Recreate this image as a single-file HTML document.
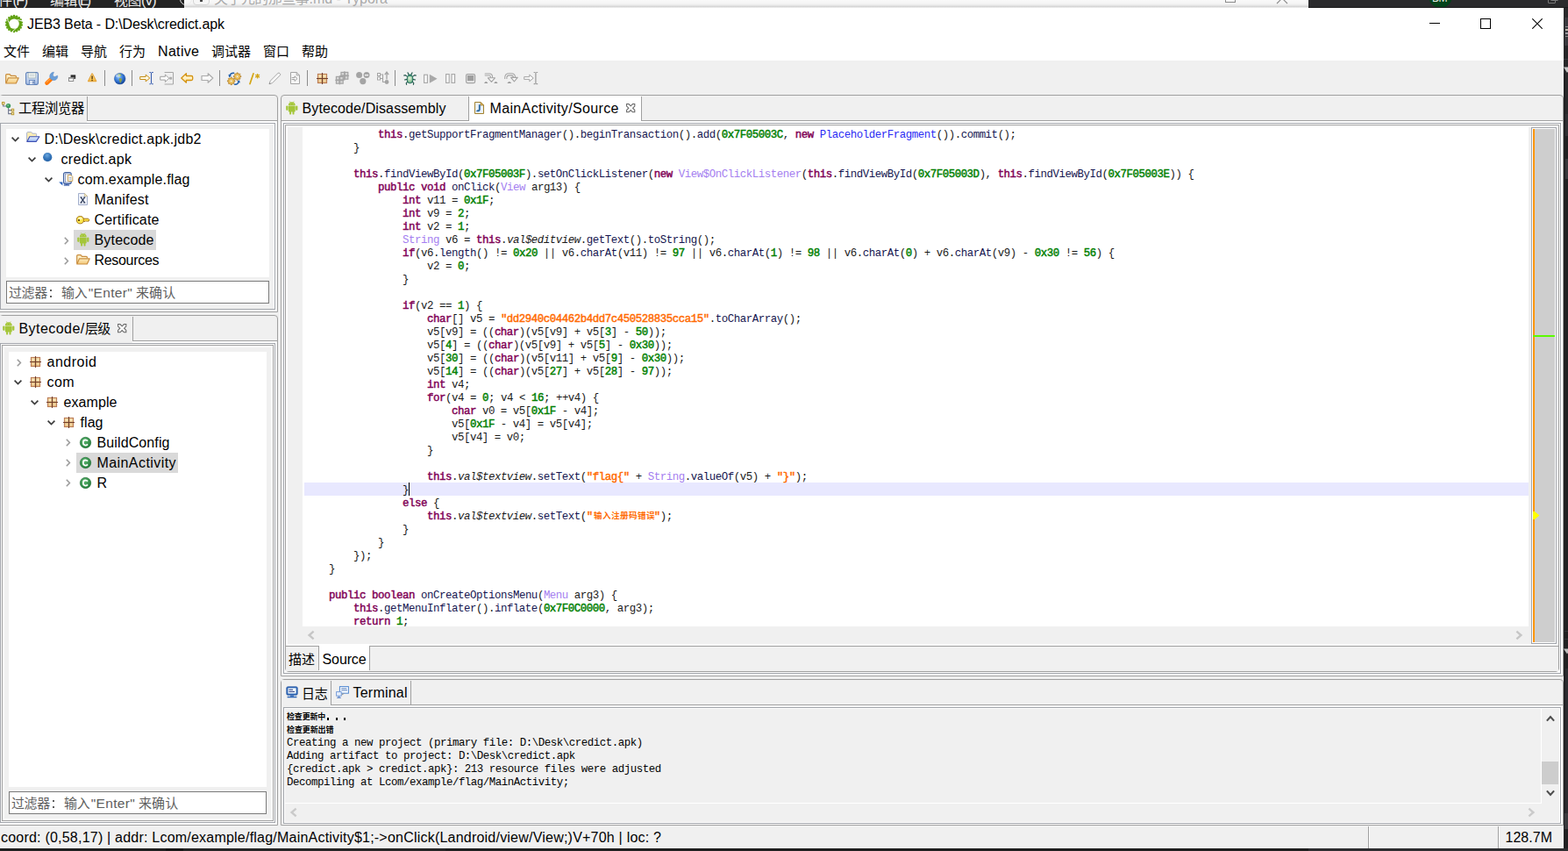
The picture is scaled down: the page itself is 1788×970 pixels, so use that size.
<!DOCTYPE html>
<html><head><meta charset="utf-8"><title>JEB3 Beta - D:\Desk\credict.apk</title>
<style>
html,body{margin:0;padding:0;}
body{width:1788px;height:970px;overflow:hidden;background:#f0f0f0;position:relative;font-family:"Liberation Sans",sans-serif;}
#root{position:absolute;left:0;top:0;width:1788px;height:970px;overflow:hidden;background:#f0f0f0;}
.k{color:#7f0055;font-weight:400;-webkit-text-stroke:0.45px #7f0055}.n{color:#008000;font-weight:400;-webkit-text-stroke:0.45px #008000}.c{color:#a47ef0}.b{color:#2a2af4}.s{color:#ff6a00;font-weight:400;-webkit-text-stroke:0.45px #ff6a00}.i{font-style:italic;color:#1a1a1a}.m{color:#15154f}
.cl{position:absolute;left:347px;height:15px;line-height:15px;white-space:pre;font-family:"Liberation Mono",monospace;font-size:12.4px;letter-spacing:-0.44px;color:#1a1a1a}
.lg{position:absolute;left:327px;height:15px;line-height:15px;white-space:pre;font-family:"Liberation Mono",monospace;font-size:12.4px;letter-spacing:-0.44px;color:#000}
.cjk{font-family:"Liberation Sans","Noto Sans CJK SC",sans-serif;}
</style></head><body><div id="root">
<svg width="0" height="0" style="position:absolute"><defs>
<linearGradient id="gFold" x1="0" y1="0" x2="0" y2="1"><stop offset="0" stop-color="#fff3c8"/><stop offset="1" stop-color="#f3c86a"/></linearGradient>
<linearGradient id="gFoldB" x1="0" y1="0" x2="0" y2="1"><stop offset="0" stop-color="#fdeec2"/><stop offset="1" stop-color="#f3c777"/></linearGradient><linearGradient id="gFoldBl" x1="0" y1="0" x2="0" y2="1"><stop offset="0" stop-color="#e6f0ff"/><stop offset="1" stop-color="#9dbcf2"/></linearGradient>
<linearGradient id="gSave" x1="0" y1="0" x2="0" y2="1"><stop offset="0" stop-color="#e4ecf8"/><stop offset="1" stop-color="#a3bbe2"/></linearGradient>
<radialGradient id="gBall" cx="0.45" cy="0.3" r="0.75"><stop offset="0" stop-color="#6aa6de"/><stop offset="0.55" stop-color="#3273b8"/><stop offset="1" stop-color="#2a64a6"/></radialGradient>
<radialGradient id="gGlobe" cx="0.4" cy="0.35" r="0.7"><stop offset="0" stop-color="#8fc4ff"/><stop offset="0.6" stop-color="#2c6fd0"/><stop offset="1" stop-color="#123d8a"/></radialGradient>
<radialGradient id="gClass" cx="0.4" cy="0.35" r="0.7"><stop offset="0" stop-color="#5fb873"/><stop offset="1" stop-color="#1f7a36"/></radialGradient>
<linearGradient id="gArr" x1="0" y1="0" x2="0" y2="1"><stop offset="0" stop-color="#fffbea"/><stop offset="1" stop-color="#ffe49a"/></linearGradient>
<linearGradient id="gPkg" x1="0" y1="0" x2="0" y2="1"><stop offset="0" stop-color="#eccf98"/><stop offset="1" stop-color="#dfae74"/></linearGradient>
<linearGradient id="gWarn" x1="0" y1="0" x2="0" y2="1"><stop offset="0" stop-color="#ffe9a8"/><stop offset="1" stop-color="#f5b83d"/></linearGradient>
<radialGradient id="gGear" cx="0.5" cy="0.5" r="0.6"><stop offset="0" stop-color="#ffe58a"/><stop offset="1" stop-color="#e09a1a"/></radialGradient>
<radialGradient id="gBug" cx="0.45" cy="0.4" r="0.7"><stop offset="0" stop-color="#e8f5e0"/><stop offset="0.6" stop-color="#8fc49a"/><stop offset="1" stop-color="#3f8f6a"/></radialGradient>
</defs></svg>
<div style="position:absolute;left:0px;top:0px;width:210px;height:9px;background:#232323;"></div>
<div style="position:absolute;left:210px;top:0px;width:1282px;height:9px;background:linear-gradient(#f9f9f9 0px,#f5f5f5 4px,#e9e9e9 6px,#d6d6d6 7.5px,#dcdcdc 8.2px,#ffffff 9px);"></div>
<div style="position:absolute;left:1492px;top:0px;width:296px;height:9px;background:#2b2b2d;"></div>
<div id="topclip" style="position:absolute;left:0;top:0;width:1788px;height:9px;overflow:hidden">
<div style="position:absolute;left:14.50px;top:-9.00px;height:20px;line-height:20px;white-space:pre;font-family:'Liberation Sans';font-size:16px;font-weight:400;color:#ececec;letter-spacing:-1.469px;">(F)</div>
<div style="position:absolute;left:88.50px;top:-9.00px;height:20px;line-height:20px;white-space:pre;font-family:'Liberation Sans';font-size:16px;font-weight:400;color:#ececec;letter-spacing:-2.914px;">(E)</div>
<div style="position:absolute;left:161.00px;top:-9.00px;height:20px;line-height:20px;white-space:pre;font-family:'Liberation Sans';font-size:16px;font-weight:400;color:#ececec;letter-spacing:-1.914px;">(V)</div>
<svg style="position:absolute;left:-2.00px;top:-11.30px;overflow:visible;" width="17.0" height="22.4" viewBox="0 -16.80 17.0 22.4"><text class="cjk" x="0" y="0" font-size="16" fill="#ececec">件</text></svg>
<svg style="position:absolute;left:57.00px;top:-11.30px;overflow:visible;" width="32.0" height="22.4" viewBox="0 -16.80 32.0 22.4"><text class="cjk" x="0" y="0" font-size="16" fill="#ececec" style="letter-spacing:-0.5px">编辑</text></svg>
<svg style="position:absolute;left:129.50px;top:-11.30px;overflow:visible;" width="32.0" height="22.4" viewBox="0 -16.80 32.0 22.4"><text class="cjk" x="0" y="0" font-size="16" fill="#ececec" style="letter-spacing:-0.5px">视图</text></svg>
<div style="position:absolute;left:204.5px;top:-8px;width:14px;height:14px;border:1.6px solid #ececec;border-radius:50%;box-sizing:border-box"></div>
<div style="position:absolute;left:219.8px;top:-10.5px;width:19px;height:16px;border:1px solid #d4d4d4;border-radius:4px;box-sizing:border-box;background:#f6f6f6"></div>
<div style="position:absolute;left:227.5px;top:0px;width:3.5px;height:1.6px;background:#444;"></div>
<svg style="position:absolute;left:244.00px;top:-12.60px;overflow:visible;" width="109.2" height="22.4" viewBox="0 -16.80 109.2 22.4"><text class="cjk" x="0" y="0" font-size="16" fill="#aaaaaa" style="letter-spacing:-0.55px">关于元的那些事</text></svg>
<div style="position:absolute;left:352.50px;top:-11.00px;height:20px;line-height:20px;white-space:pre;font-family:'Liberation Sans';font-size:16px;font-weight:400;color:#aaaaaa;letter-spacing:-0.001px;">.md - Typora</div>
<div style="position:absolute;left:1397px;top:-8px;width:12px;height:11px;border:1px solid #8a8a8a;box-sizing:border-box"></div>
<svg style="position:absolute;left:1455px;top:-9px" width="14" height="14"><path d="M1 1 L13 13 M13 1 L1 13" stroke="#8a8a8a" stroke-width="1.1"/></svg>
<div style="position:absolute;left:1628.5px;top:-18.3px;width:27px;height:27px;border-radius:50%;background:#03431a"></div>
<div style="position:absolute;left:1633.00px;top:-12.00px;height:20px;line-height:20px;white-space:pre;font-family:'Liberation Sans';font-size:12px;font-weight:400;color:#e4ece4;letter-spacing:-1.172px;">DM</div>
<div style="position:absolute;left:1492px;top:8px;width:296px;height:1px;background:#1b1b1c;"></div>
<div style="position:absolute;left:1765px;top:-6px;width:9px;height:10px;border:1px solid #7a7a7a;box-sizing:border-box;border-radius:1px"></div>
<div style="position:absolute;left:1768px;top:-9px;width:9px;height:10px;border:1px solid #7a7a7a;box-sizing:border-box;border-radius:1px"></div>
</div>
<div style="position:absolute;left:1783px;top:9px;width:5px;height:961px;background:#202022;"></div>
<div style="position:absolute;left:1783px;top:9px;width:5px;height:11px;background:#29292b;"></div>
<div style="position:absolute;left:1784px;top:20px;width:4px;height:32px;background:#39393e;"></div>
<div style="position:absolute;left:1785px;top:30px;width:3px;height:1px;background:#8d8d8d;"></div>
<div style="position:absolute;left:1785px;top:33px;width:3px;height:2px;background:#b9b3a6;"></div>
<div style="position:absolute;left:1785px;top:37px;width:3px;height:2px;background:#9a9aa0;"></div>
<div style="position:absolute;left:1785px;top:41px;width:3px;height:1px;background:#8d8d8d;"></div>
<div style="position:absolute;left:1783px;top:52px;width:5px;height:32px;background:#262628;"></div>
<div style="position:absolute;left:1783px;top:67px;width:5px;height:1px;background:#3a3a3f;"></div>
<svg style="position:absolute;left:1783px;top:76px" width="5" height="8"><path d="M0 0.5 H8 L4 7 Z" fill="#c6c6c6"/></svg>
<div style="position:absolute;left:1785px;top:84px;width:3px;height:46px;background:#29292b;"></div>
<div style="position:absolute;left:1785px;top:130px;width:3px;height:25px;background:#303034;"></div>
<div style="position:absolute;left:1785px;top:181px;width:3px;height:23px;background:#38383c;"></div>
<div style="position:absolute;left:1784px;top:719px;width:4px;height:1px;background:#333337;"></div>
<div style="position:absolute;left:1784px;top:728px;width:4px;height:1px;background:#333337;"></div>
<svg style="position:absolute;left:1783px;top:739px" width="5" height="7"><path d="M0 0.5 H8 L4 6.5 Z" fill="#bdbdbd"/></svg>
<div style="position:absolute;left:1785px;top:762px;width:3px;height:165px;background:#2c2c30;"></div>
<div style="position:absolute;left:1784px;top:927px;width:4px;height:18px;background:#3a3a3e;"></div>
<div style="position:absolute;left:0px;top:967px;width:1788px;height:3px;background:#1e1e1e;"></div>
<div style="position:absolute;left:189px;top:967px;width:20px;height:3px;background:#151515;"></div>
<div style="position:absolute;left:209px;top:967px;width:299px;height:3px;background:#242424;"></div>
<div style="position:absolute;left:1492px;top:967px;width:296px;height:3px;background:#2d2d30;"></div>
<div style="position:absolute;left:0px;top:9px;width:1783px;height:60px;background:#ffffff;"></div>
<div style="position:absolute;left:6px;top:17px;line-height:0"><svg width="20" height="20" viewBox="0 0 20 20" style="overflow:visible"><g fill="#62a214"><circle cx="18.76" cy="11.55" r="1.25"/><circle cx="17.71" cy="14.45" r="1.25"/><circle cx="15.72" cy="16.82" r="1.25"/><circle cx="13.04" cy="18.36" r="1.25"/><circle cx="10.00" cy="18.90" r="1.25"/><circle cx="6.96" cy="18.36" r="1.25"/><circle cx="4.28" cy="16.82" r="1.25"/><circle cx="2.29" cy="14.45" r="1.25"/><circle cx="1.24" cy="11.55" r="1.25"/><circle cx="1.24" cy="8.45" r="1.25"/><circle cx="2.29" cy="5.55" r="1.25"/><circle cx="4.28" cy="3.18" r="1.25"/><circle cx="6.96" cy="1.64" r="1.25"/><circle cx="10.00" cy="1.10" r="1.25"/><circle cx="13.04" cy="1.64" r="1.25"/><circle cx="15.72" cy="3.18" r="1.25"/><circle cx="17.71" cy="5.55" r="1.25"/><circle cx="18.76" cy="8.45" r="1.25"/><circle cx="10" cy="10" r="8.9"/></g><circle cx="10.1" cy="10.1" r="5.7" fill="#fff"/><g stroke="#fff" stroke-width="0.9" fill="none" stroke-linecap="round"><path d="M2.6 3.4 Q2.4 6.6 4.6 9.4"/><path d="M14.2 5.6 Q16.8 6.2 19.6 7"/><path d="M12 15.4 Q10.4 17.4 8.2 19"/></g></svg></div>
<div style="position:absolute;left:31.00px;top:18.00px;height:20px;line-height:20px;white-space:pre;font-family:'Liberation Sans';font-size:16px;font-weight:400;color:#000;letter-spacing:-0.118px;">JEB3 Beta - D:\Desk\credict.apk</div>
<div style="position:absolute;left:1630px;top:26px;width:12px;height:1px;background:#000;"></div>
<div style="position:absolute;box-sizing:border-box;left:1688px;top:21px;width:12px;height:12px;border:1px solid #000;background:transparent;border-radius:0;"></div>
<svg style="position:absolute;left:1747px;top:21px" width="12" height="12"><path d="M0.3 0.3 L11.7 11.7 M11.7 0.3 L0.3 11.7" stroke="#000" stroke-width="1.1"/></svg>
<svg style="position:absolute;left:4.00px;top:48.25px;overflow:visible;" width="31.0" height="21.0" viewBox="0 -15.75 31.0 21.0"><text class="cjk" x="0" y="0" font-size="15" fill="#000">文件</text></svg>
<svg style="position:absolute;left:48.00px;top:48.25px;overflow:visible;" width="31.0" height="21.0" viewBox="0 -15.75 31.0 21.0"><text class="cjk" x="0" y="0" font-size="15" fill="#000">编辑</text></svg>
<svg style="position:absolute;left:92.00px;top:48.25px;overflow:visible;" width="31.0" height="21.0" viewBox="0 -15.75 31.0 21.0"><text class="cjk" x="0" y="0" font-size="15" fill="#000">导航</text></svg>
<svg style="position:absolute;left:136.00px;top:48.25px;overflow:visible;" width="31.0" height="21.0" viewBox="0 -15.75 31.0 21.0"><text class="cjk" x="0" y="0" font-size="15" fill="#000">行为</text></svg>
<div style="position:absolute;left:180.00px;top:49.00px;height:20px;line-height:20px;white-space:pre;font-family:'Liberation Sans';font-size:16px;font-weight:400;color:#000;letter-spacing:0.328px;">Native</div>
<svg style="position:absolute;left:241.00px;top:48.25px;overflow:visible;" width="46.0" height="21.0" viewBox="0 -15.75 46.0 21.0"><text class="cjk" x="0" y="0" font-size="15" fill="#000">调试器</text></svg>
<svg style="position:absolute;left:300.00px;top:48.25px;overflow:visible;" width="31.0" height="21.0" viewBox="0 -15.75 31.0 21.0"><text class="cjk" x="0" y="0" font-size="15" fill="#000">窗口</text></svg>
<svg style="position:absolute;left:344.00px;top:48.25px;overflow:visible;" width="31.0" height="21.0" viewBox="0 -15.75 31.0 21.0"><text class="cjk" x="0" y="0" font-size="15" fill="#000">帮助</text></svg>
<div style="position:absolute;left:119px;top:80px;width:1px;height:18px;background:#8c8c8c;"></div>
<div style="position:absolute;left:150px;top:80px;width:1px;height:18px;background:#8c8c8c;"></div>
<div style="position:absolute;left:250px;top:80px;width:1px;height:18px;background:#8c8c8c;"></div>
<div style="position:absolute;left:350px;top:80px;width:1px;height:18px;background:#8c8c8c;"></div>
<div style="position:absolute;left:450px;top:80px;width:1px;height:18px;background:#8c8c8c;"></div>
<div style="position:absolute;left:5.6px;top:83.9px;line-height:0"><svg width="16" height="12" viewBox="0 0 16 12" style="overflow:visible"><path d="M0.7 10.6 V1.8 Q0.7 0.7 1.8 0.7 H4.6 Q5.4 0.7 5.8 1.4 L6.4 2.3 H11.4 Q12.4 2.3 12.4 3.3 V4.6" fill="#fdefc6" stroke="#c98d3e" stroke-width="1.2" stroke-linejoin="round"/><path d="M0.8 11 L3.5 4.8 H15.2 L12.3 11 Z" fill="url(#gFoldB)" stroke="#c98d3e" stroke-width="1.2" stroke-linejoin="round"/></svg></div>
<div style="position:absolute;left:29px;top:81.9px;line-height:0"><svg width="15" height="15" viewBox="0 0 15 15" style="overflow:visible"><rect x="0.6" y="0.6" width="13.8" height="13.8" rx="1.6" fill="url(#gSave)" stroke="#5c7fb8" stroke-width="1.1"/><rect x="3.2" y="0.9" width="8.6" height="6" rx="0.6" fill="#f7faf8" stroke="#8ea3a8" stroke-width="0.7"/><path d="M4.6 2.9 H10.4 M4.6 4.6 H10.4" stroke="#b9c4c6" stroke-width="0.8"/><rect x="4.4" y="9.4" width="6.2" height="5" fill="#eef3fb" stroke="#5c7fb8" stroke-width="0.8"/><rect x="5.6" y="10.4" width="1.6" height="3" fill="#c5d3ea"/><rect x="8.2" y="10.4" width="1.4" height="3.2" fill="#4f6fa8"/></svg></div>
<div style="position:absolute;left:51px;top:81.5px;line-height:0"><svg width="16" height="16" viewBox="0 0 16 16" style="overflow:visible"><path d="M2.5 12.6 L7 8.4" stroke="#ff7a0a" stroke-width="4.6" stroke-linecap="round"/><path d="M2.3 11.6 L6.4 7.8" stroke="#ffa64d" stroke-width="1.2" stroke-linecap="round"/><path d="M6.6 7.6 C4.9 5.4 5.9 1.6 9 0.5 L10.4 0.3 L9.2 3.4 Q9.4 5.2 11.4 5.6 L14.6 4.2 C15.4 7.6 12.2 10 9.4 9.4 Q7.6 9 6.6 7.6 Z" fill="#6c9fd8" stroke="#5a8cc8" stroke-width="0.6"/></svg></div>
<div style="position:absolute;left:78px;top:85.1px;line-height:0"><svg width="8.4" height="8" viewBox="0 0 8.4 8" style="overflow:visible"><rect x="2.6" y="0.4" width="5.6" height="4.4" fill="#2b2b2b"/><rect x="3.4" y="2.6" width="4" height="1.6" fill="#5a5a5a"/><rect x="0.5" y="3.5" width="5.2" height="4" fill="#ffffff" stroke="#8c8c8c"/><rect x="0.5" y="3.5" width="5.2" height="1.2" fill="#8c8c8c"/></svg></div>
<div style="position:absolute;left:99.9px;top:83.4px;line-height:0"><svg width="10.3" height="11" viewBox="0 0 10.3 11" style="overflow:visible"><path d="M5.1 1.2 L9.4 9.4 H0.9 Z" fill="url(#gWarn)" stroke="#e4a43c" stroke-width="1.8" stroke-linejoin="round"/><path d="M5.1 1.6 L9.1 9.2 H1.2 Z" fill="url(#gWarn)"/><rect x="4.3" y="3.4" width="1.6" height="3.7" fill="#6b4a12"/><rect x="4.3" y="7.8" width="1.6" height="1.4" fill="#6b4a12"/></svg></div>
<div style="position:absolute;left:129.8px;top:82.9px;line-height:0"><svg width="13.4" height="13.4" viewBox="0 0 13.4 13.4" style="overflow:visible"><circle cx="6.7" cy="6.7" r="6.3" fill="url(#gGlobe)" stroke="#1d4a9a" stroke-width="0.5"/><path d="M4.6 1.4 C6 0.9 8 1.4 8.6 2.6 C8 3.6 7.2 3.6 7 4.6 C6.2 5.2 5.2 4.6 5 3.6 C4.4 3 4.2 2.2 4.6 1.4 Z" fill="#8fb86a"/><path d="M6.2 6.2 C7.4 5.6 9 6.4 9.2 7.8 C9 9.4 8 10 7.6 11.6 C6.8 11.8 6.4 10.4 6.4 9.4 C5.6 8.6 5.4 7 6.2 6.2 Z" fill="#8a9c4a"/><ellipse cx="4.6" cy="3.4" rx="2.8" ry="1.8" fill="#fff" opacity="0.45"/></svg></div>
<div style="position:absolute;left:159px;top:82px;line-height:0"><svg width="16" height="14.2" viewBox="0 0 16 14.2" style="overflow:visible"><path d="M0.7 5.5 H7.2 V3.1 L11.8 7 L7.2 10.9 V8.5 H0.7 Z" fill="#fffbe6" stroke="#c48a12" stroke-width="1" stroke-linejoin="round"/><path d="M11.4 0.5 H13 M14 0.5 H15.8 M11.4 13.7 H13 M14 13.7 H15.8 M13.5 0.8 V13.4" stroke="#3a5fb0" stroke-width="1.1" fill="none"/></svg></div>
<div style="position:absolute;left:182px;top:82px;line-height:0"><svg width="16" height="14.5" viewBox="0 0 16 14.5" style="overflow:visible"><path d="M5.6 0.5 H15.5 V14 H5.6" fill="none" stroke="#a6a6a6" stroke-width="1"/><path d="M0.7 5.3 H6.4 V3 L10.8 7.2 L6.4 11.4 V9.1 H0.7 Z" fill="#fbfbfb" stroke="#a2a2a2" stroke-width="1" stroke-linejoin="round"/><rect x="11.2" y="5.8" width="3" height="2.8" fill="#acacac"/></svg></div>
<div style="position:absolute;left:205.5px;top:83px;line-height:0"><svg width="15" height="12" viewBox="0 0 15 12" style="overflow:visible"><path d="M0.8 6 L6.4 0.8 V3.5 H12.2 Q13.7 3.5 13.7 5 V7 Q13.7 8.5 12.2 8.5 H6.4 V11.2 Z" fill="url(#gArr)" stroke="#d4920e" stroke-width="1.3" stroke-linejoin="round"/></svg></div>
<div style="position:absolute;left:228.5px;top:83px;line-height:0"><svg width="15" height="12" viewBox="0 0 15 12" style="overflow:visible"><path d="M13.8 6 L8.2 0.8 V3.5 H1 V8.5 H8.2 V11.2 Z" fill="#f8f8f8" stroke="#acacac" stroke-width="1.2" stroke-linejoin="round"/></svg></div>
<div style="position:absolute;left:259px;top:81.5px;line-height:0"><svg width="16" height="16" viewBox="0 0 16 16" style="overflow:visible"><path d="M2.8 4.4 C3.6 2 6 0.9 8.2 1.3" fill="none" stroke="#1f5fae" stroke-width="1.4"/><path d="M1.4 2.8 L2.2 6.2 L5 4.4 Z" fill="#1f5fae"/><path d="M13.4 11 C12.6 13.4 10.2 14.5 8 14.1" fill="none" stroke="#1f5fae" stroke-width="1.4"/><path d="M14.8 12.6 L14 9.2 L11.2 11 Z" fill="#1f5fae"/><polygon points="15.85,4.56 15.85,5.84 14.69,5.96 14.32,6.84 15.06,7.75 14.15,8.66 13.24,7.92 12.36,8.29 12.24,9.45 10.96,9.45 10.84,8.29 9.96,7.92 9.05,8.66 8.14,7.75 8.88,6.84 8.51,5.96 7.35,5.84 7.35,4.56 8.51,4.44 8.88,3.56 8.14,2.65 9.05,1.74 9.96,2.48 10.84,2.11 10.96,0.95 12.24,0.95 12.36,2.11 13.24,2.48 14.15,1.74 15.06,2.65 14.32,3.56 14.69,4.44" fill="url(#gGear)" stroke="#a8782a" stroke-width="0.7" stroke-linejoin="round"/><circle cx="11.60" cy="5.20" r="1.20" fill="#fffbe6" stroke="#b88a3a" stroke-width="0.4"/><polygon points="8.95,9.76 8.95,11.04 7.79,11.16 7.42,12.04 8.16,12.95 7.25,13.86 6.34,13.12 5.46,13.49 5.34,14.65 4.06,14.65 3.94,13.49 3.06,13.12 2.15,13.86 1.24,12.95 1.98,12.04 1.61,11.16 0.45,11.04 0.45,9.76 1.61,9.64 1.98,8.76 1.24,7.85 2.15,6.94 3.06,7.68 3.94,7.31 4.06,6.15 5.34,6.15 5.46,7.31 6.34,7.68 7.25,6.94 8.16,7.85 7.42,8.76 7.79,9.64" fill="url(#gGear)" stroke="#a8782a" stroke-width="0.7" stroke-linejoin="round"/><circle cx="4.70" cy="10.40" r="1.20" fill="#fffbe6" stroke="#b88a3a" stroke-width="0.4"/></svg></div>
<div style="position:absolute;left:283.5px;top:82.5px;line-height:0"><svg width="13" height="13" viewBox="0 0 13 13" style="overflow:visible"><path d="M1 12.6 L5 0.8" stroke="#d4a514" stroke-width="1.7" stroke-linecap="round"/><path d="M9.6 1 V6.4 M7.2 2.3 L12 5.1 M12 2.3 L7.2 5.1" stroke="#d4a514" stroke-width="1.3"/></svg></div>
<div style="position:absolute;left:306px;top:82px;line-height:0"><svg width="15" height="15" viewBox="0 0 15 15" style="overflow:visible"><path d="M1 13.8 L2.2 10.2 L11 1.4 Q12 0.6 13 1.6 L13.4 2 Q14.2 3 13.4 3.8 L4.6 12.6 Z" fill="#f7f7f7" stroke="#a8a8a8" stroke-width="1" stroke-linejoin="round"/><path d="M0.8 14 L2.8 13.4 L1.4 12 Z" fill="#8a8a8a"/></svg></div>
<div style="position:absolute;left:330.5px;top:82px;line-height:0"><svg width="11" height="14" viewBox="0 0 11 14" style="overflow:visible"><path d="M0.5 0.5 H7.2 L10.5 3.8 V13.5 H0.5 Z" fill="#f6f6f6" stroke="#a4a4a4"/><path d="M7.2 0.5 V3.8 H10.5" fill="none" stroke="#a4a4a4"/><path d="M1.6 6.6 H5 V4.8 L8 7.6 L5 10.4 V8.6 H1.6" fill="#fdfdfd" stroke="#9c9c9c" stroke-width="1" stroke-linejoin="round"/></svg></div>
<div style="position:absolute;left:361px;top:83px;line-height:0"><svg width="13" height="13" viewBox="0 0 13 13" style="overflow:visible"><rect x="1.4" y="1.4" width="10.2" height="10.2" fill="url(#gPkg)" stroke="#b9774f" stroke-width="1"/><rect x="2.6" y="2.6" width="2.6" height="2.6" fill="#f6e4b8"/><rect x="7.8" y="2.6" width="2.6" height="2.6" fill="#f6e4b8"/><rect x="2.6" y="7.8" width="2.6" height="2.6" fill="#f0d6a2"/><rect x="7.8" y="7.8" width="2.6" height="2.6" fill="#f0d6a2"/><path d="M6.5 0 V13 M0 6.5 H13" stroke="#6f3f2c" stroke-width="1.1"/></svg></div>
<div style="position:absolute;left:381.6px;top:81px;line-height:0"><svg width="16.4" height="15.6" viewBox="0 0 16.4 15.6" style="overflow:visible"><path d="M5.7 5.3 h10.4 M10.9 0.1 v10.4" stroke="#a2a2a2" stroke-width="1"/><rect x="6.4" y="0.8" width="9" height="9" fill="#a4a4a4"/><rect x="7.6" y="2" width="2.4" height="2.4" fill="#d6d6d6"/><rect x="7.6" y="6.2" width="2.4" height="2.4" fill="#d6d6d6"/><rect x="11.8" y="2" width="2.4" height="2.4" fill="#d6d6d6"/><rect x="11.8" y="6.2" width="2.4" height="2.4" fill="#d6d6d6"/><path d="M0.1 10.3 h10.4 M5.3 5.1 v10.4" stroke="#a2a2a2" stroke-width="1"/><rect x="0.8" y="5.8" width="9" height="9" fill="#a4a4a4"/><rect x="2" y="7" width="2.4" height="2.4" fill="#d6d6d6"/><rect x="2" y="11.2" width="2.4" height="2.4" fill="#d6d6d6"/><rect x="6.2" y="7" width="2.4" height="2.4" fill="#d6d6d6"/><rect x="6.2" y="11.2" width="2.4" height="2.4" fill="#d6d6d6"/></svg></div>
<div style="position:absolute;left:405.6px;top:81.9px;line-height:0"><svg width="16" height="15" viewBox="0 0 16 15" style="overflow:visible"><circle cx="3.6" cy="3.6" r="3.5" fill="#a4a4a4"/><circle cx="12" cy="3.6" r="3.5" fill="#a4a4a4"/><circle cx="7.8" cy="10.6" r="3.6" fill="#a4a4a4"/><rect x="10" y="3" width="4" height="1.3" fill="#f6f6f6"/></svg></div>
<div style="position:absolute;left:429.6px;top:81.4px;line-height:0"><svg width="14" height="15.5" viewBox="0 0 14 15.5" style="overflow:visible"><rect x="0.5" y="2.5" width="3" height="3" fill="#fff" stroke="#a4a4a4"/><rect x="0.5" y="7" width="3" height="3" fill="#fff" stroke="#a4a4a4"/><path d="M4 4 H6.5 V12.5 H9.5 M4 8.5 H6.5" fill="none" stroke="#a4a4a4" stroke-width="1.1"/><circle cx="11" cy="12.5" r="2.4" fill="#a4a4a4"/><path d="M11 9.6 V1.8 M8.8 4.2 L11 1.2 L13.2 4.2" fill="none" stroke="#a4a4a4" stroke-width="1.3"/></svg></div>
<div style="position:absolute;left:460px;top:82px;line-height:0"><svg width="15" height="15" viewBox="0 0 15 15" style="overflow:visible"><g stroke="#1f5348" stroke-width="1.1" fill="none" stroke-linecap="round"><path d="M5 5.6 L2.2 3.6 L0.6 4 M4.4 8.4 L1.4 9 M5 10.8 L3.2 13 L3.6 14.4 M10 5.6 L12.8 3.6 L14.4 4 M10.6 8.4 L13.6 9 M10 10.8 L11.8 13 L11.4 14.4 M6.2 3.4 L5 0.8 M8.8 3.4 L10 0.8"/></g><ellipse cx="7.5" cy="8.2" rx="3.3" ry="4.6" fill="url(#gBug)" stroke="#1f6a5a" stroke-width="1"/><ellipse cx="7.5" cy="3.8" rx="1.8" ry="1.2" fill="#2f7f6a"/></svg></div>
<div style="position:absolute;left:482.5px;top:83.5px;line-height:0"><svg width="16" height="12" viewBox="0 0 16 12" style="overflow:visible"><rect x="0.6" y="1.2" width="3.8" height="9.2" fill="#f8f8f8" stroke="#a6a6a6" stroke-width="1.1"/><path d="M6.8 0.8 L15.6 5.8 L6.8 10.8 Z" fill="#a8a8a8"/></svg></div>
<div style="position:absolute;left:507.5px;top:84px;line-height:0"><svg width="11.4" height="11" viewBox="0 0 11.4 11" style="overflow:visible"><rect x="0.6" y="0.6" width="3.6" height="9.8" fill="#f8f8f8" stroke="#a6a6a6" stroke-width="1.1"/><rect x="7" y="0.6" width="3.6" height="9.8" fill="#f8f8f8" stroke="#a6a6a6" stroke-width="1.1"/></svg></div>
<div style="position:absolute;left:530.8px;top:83.8px;line-height:0"><svg width="11.2" height="11.2" viewBox="0 0 11.2 11.2" style="overflow:visible"><rect x="0.6" y="0.6" width="10" height="10" rx="1.6" fill="#f1f1f1" stroke="#a2a2a2" stroke-width="1.2"/><rect x="1.9" y="2" width="7.4" height="6" fill="#9e9e9e"/><rect x="1.9" y="8" width="7.4" height="1.2" fill="#dadada"/></svg></div>
<div style="position:absolute;left:551.6px;top:83.4px;line-height:0"><svg width="16" height="12" viewBox="0 0 16 12" style="overflow:visible"><path d="M0.8 2 H6 Q8.4 2 8.4 4.4 V6" fill="none" stroke="#a2a2a2" stroke-width="3.2"/><path d="M0.8 2 H6 Q8.4 2 8.4 4.4 V6" fill="none" stroke="#f8f8f8" stroke-width="1.1"/><path d="M4.4 5.8 H12.4 L8.4 10.4 Z" fill="#f8f8f8" stroke="#a2a2a2" stroke-width="1.1" stroke-linejoin="round"/><path d="M0 12 Q2.2 8 4.4 12 Z M11.2 12 Q13.4 8 15.6 12 Z" fill="#9a9a9a"/></svg></div>
<div style="position:absolute;left:574.6px;top:83.4px;line-height:0"><svg width="16" height="12" viewBox="0 0 16 12" style="overflow:visible"><path d="M1.8 7 V5.6 Q1.8 1.8 5.6 1.8 H8 Q11.4 1.8 11.4 5 V5.6" fill="none" stroke="#a2a2a2" stroke-width="3.2"/><path d="M1.8 7 V5.6 Q1.8 1.8 5.6 1.8 H8 Q11.4 1.8 11.4 5 V5.6" fill="none" stroke="#f8f8f8" stroke-width="1.1"/><path d="M7.6 5.4 H15.2 L11.4 9.8 Z" fill="#f8f8f8" stroke="#a2a2a2" stroke-width="1.1" stroke-linejoin="round"/><path d="M3.4 12 Q5.8 8 8.2 12 Z" fill="#9a9a9a"/></svg></div>
<div style="position:absolute;left:596.8px;top:82px;line-height:0"><svg width="16.5" height="14.2" viewBox="0 0 16.5 14.2" style="overflow:visible"><path d="M0.7 5.6 H6.8 V3.2 L11.2 7 L6.8 10.8 V8.4 H0.7 Z" fill="#fbfbfb" stroke="#a4a4a4" stroke-width="1" stroke-linejoin="round"/><path d="M11.6 0.5 H13.4 M14.4 0.5 H16.2 M11.6 13.7 H13.4 M14.4 13.7 H16.2 M13.9 0.8 V13.4" stroke="#9a9a9a" stroke-width="1.25" fill="none"/></svg></div>
<div style="position:absolute;box-sizing:border-box;left:-1px;top:108px;width:318px;height:248px;border:1px solid #a0a0a0;background:#f0f0f0;border-radius:4px 4px 0 0;"></div>
<div style="position:absolute;left:0px;top:138px;width:316px;height:217px;background:#ffffff;"></div>
<div style="position:absolute;left:-1px;top:137px;width:318px;height:1px;background:#a0a0a0;"></div>
<div style="position:absolute;left:0px;top:109px;width:99px;height:29px;background:#f0f0f0;"></div>
<div style="position:absolute;left:99px;top:110px;width:1px;height:28px;background:#a0a0a0;"></div>
<div style="position:absolute;left:0px;top:138px;width:99px;height:2px;background:#f0f0f0;"></div>
<div style="position:absolute;left:2px;top:115.8px;line-height:0"><svg width="15" height="16" viewBox="0 0 15 16" style="overflow:visible"><path d="M1.6 3 V5 H5 M7.6 7 V13.6 H11 M7.6 9.6 H11" fill="none" stroke="#727a92" stroke-width="1.1"/><rect x="0.5" y="0.5" width="2.4" height="2.4" fill="#fffbe0" stroke="#b8952a" stroke-width="1"/><rect x="11.3" y="8.3" width="2.4" height="2.4" fill="#fffbe0" stroke="#b8952a" stroke-width="1"/><rect x="11.3" y="12.3" width="2.4" height="2.4" fill="#fffbe0" stroke="#b8952a" stroke-width="1"/><circle cx="7.5" cy="4.6" r="2.7" fill="#3d9a5c"/><circle cx="7.1" cy="4" r="1.1" fill="#7fc79a" opacity="0.8"/></svg></div>
<svg style="position:absolute;left:21.10px;top:113.13px;overflow:visible;" width="76.2" height="21.6" viewBox="0 -16.17 76.2 21.6"><text class="cjk" x="0" y="0" font-size="15.4" fill="#000" style="letter-spacing:-0.35px">工程浏览器</text></svg>
<div style="position:absolute;box-sizing:border-box;left:0px;top:140px;width:314px;height:213px;border:1px solid #a2a5ab;background:#ffffff;border-radius:0;"></div>
<div style="position:absolute;left:1px;top:142px;width:311px;height:210px;background:#f0f0f0;"></div>
<div style="position:absolute;left:7px;top:147px;width:300px;height:169px;background:#ffffff;"></div>
<div style="position:absolute;box-sizing:border-box;left:7px;top:320px;width:300px;height:26px;border:1px solid #7a7a7a;background:#ffffff;border-radius:0;"></div>
<div style="position:absolute;left:84px;top:262px;width:94px;height:23px;background:#d9d9d9;"></div>
<div style="position:absolute;left:13px;top:155.9px;line-height:0"><svg width="9" height="6" viewBox="0 0 9 6" style="overflow:visible"><path d="M0.6 0.7 L4.5 4.5 L8.4 0.7" fill="none" stroke="#3c3c3c" stroke-width="1.7"/></svg></div>
<div style="position:absolute;left:32px;top:178.9px;line-height:0"><svg width="9" height="6" viewBox="0 0 9 6" style="overflow:visible"><path d="M0.6 0.7 L4.5 4.5 L8.4 0.7" fill="none" stroke="#3c3c3c" stroke-width="1.7"/></svg></div>
<div style="position:absolute;left:51px;top:201.9px;line-height:0"><svg width="9" height="6" viewBox="0 0 9 6" style="overflow:visible"><path d="M0.6 0.7 L4.5 4.5 L8.4 0.7" fill="none" stroke="#3c3c3c" stroke-width="1.7"/></svg></div>
<div style="position:absolute;left:72.6px;top:270.2px;line-height:0"><svg width="6" height="9" viewBox="0 0 6 9" style="overflow:visible"><path d="M0.8 0.7 L4.4 4.5 L0.8 8.3" fill="none" stroke="#9c9c9c" stroke-width="1.6"/></svg></div>
<div style="position:absolute;left:72.6px;top:293.2px;line-height:0"><svg width="6" height="9" viewBox="0 0 6 9" style="overflow:visible"><path d="M0.8 0.7 L4.4 4.5 L0.8 8.3" fill="none" stroke="#9c9c9c" stroke-width="1.6"/></svg></div>
<div style="position:absolute;left:29.6px;top:150.2px;line-height:0"><svg width="16" height="12" viewBox="0 0 16 12" style="overflow:visible"><path d="M0.6 10.8 V1.8 Q0.6 0.6 1.8 0.6 H5.4 Q6.4 0.6 6.6 1.6 L6.8 2.2 H10.6 Q11.6 2.2 11.6 3.2 V5.6" fill="#fdeeb4" stroke="#a9b2cc" stroke-width="1"/><path d="M0.8 11.4 L3.8 5.8 H14.9 L11.2 11.4 Z" fill="url(#gFoldBl)" stroke="#3d4fb4" stroke-width="1.1" stroke-linejoin="round"/></svg></div>
<div style="position:absolute;left:48.8px;top:174px;line-height:0"><svg width="10.4" height="10.4" viewBox="0 0 10.4 10.4" style="overflow:visible"><circle cx="5.2" cy="5.2" r="5.1" fill="url(#gBall)"/></svg></div>
<div style="position:absolute;left:67px;top:196.4px;line-height:0"><svg width="16" height="16" viewBox="0 0 16 16" style="overflow:visible"><rect x="5.6" y="0.6" width="8.6" height="12.8" rx="2" fill="#fff" stroke="#3f5f9f" stroke-width="1.2"/><rect x="7.4" y="2" width="5.6" height="10" fill="#f4f6fb" stroke="#6a7fb0" stroke-width="0.7"/><path d="M10.4 3.6 H14 L15.8 5.4 V10.4 H10.4 Z" fill="#fffdf2" stroke="#c49a4a" stroke-width="0.9"/><path d="M11.6 6.4 H14.6 M11.6 8.2 H14.6" stroke="#8a9ac0" stroke-width="0.8"/><path d="M8 13.6 V14.6 H6 V15.6 H12 V14.6 H10.4 V13.6" fill="#4a6ab0" stroke="#4a6ab0" stroke-width="0.5"/><path d="M0.2 11.6 H4.4 V15.6 Z" fill="#2a62c0"/></svg></div>
<div style="position:absolute;left:89px;top:220px;line-height:0"><svg width="11" height="14" viewBox="0 0 11 14" style="overflow:visible"><path d="M0.5 0.5 H7.4 L10.5 3.6 V13.5 H0.5 Z" fill="#f1f4fb" stroke="#a3afcc"/><path d="M7.4 0.5 V3.6 H10.5 Z" fill="#fdf3cf" stroke="#c8b98a" stroke-width="0.8"/><path d="M3.3 5 L7.5 11 M7.5 5 L3.3 11" stroke="#22304f" stroke-width="1.25"/><path d="M2.4 4.9 H4.6 M6.2 4.9 H8.4 M2.4 11.1 H4.6 M6.2 11.1 H8.4" stroke="#22304f" stroke-width="0.9"/></svg></div>
<div style="position:absolute;left:87px;top:245.6px;line-height:0"><svg width="16" height="9.6" viewBox="0 0 16 9.6" style="overflow:visible"><path d="M6.4 3.2 H13.4 L15 4.6 L13.8 6.4 L12.8 5.6 L12 6.6 L11 5.6 L10.2 6.4 H6.4 Z" fill="#ffdf3a" stroke="#9a6a14" stroke-width="0.9" stroke-linejoin="round"/><ellipse cx="4.4" cy="4.7" rx="4" ry="4.2" fill="#ffe84e" stroke="#9a6a14" stroke-width="0.9"/><ellipse cx="4.4" cy="3.2" rx="2.4" ry="1.4" fill="#fffac8" opacity="0.85"/><circle cx="3" cy="5" r="1.05" fill="#4a2f0c"/></svg></div>
<div style="position:absolute;left:87.5px;top:265px;line-height:0"><svg width="13.6" height="16" viewBox="0 0 13.6 16" style="overflow:visible"><g fill="#a4c639"><path d="M2.9 5.5 H10.7 V11.7 Q10.7 12.5 9.9 12.5 H3.7 Q2.9 12.5 2.9 11.7 Z"/><path d="M2.9 5 Q3.1 1.4 6.8 1.3 Q10.5 1.4 10.7 5 Z"/><rect x="0.2" y="5.4" width="2.3" height="5.6" rx="1.15"/><rect x="11.1" y="5.4" width="2.3" height="5.6" rx="1.15"/><rect x="4.1" y="11.6" width="2" height="4" rx="0.95"/><rect x="7.5" y="11.6" width="2" height="4" rx="0.95"/></g><path d="M4.3 0.3 L5.2 1.9 M9.3 0.3 L8.4 1.9" stroke="#a4c639" stroke-width="0.6"/><circle cx="5.1" cy="3.3" r="0.45" fill="#dbe9a8"/><circle cx="8.5" cy="3.3" r="0.45" fill="#dbe9a8"/></svg></div>
<div style="position:absolute;left:86.8px;top:290.3px;line-height:0"><svg width="16" height="12" viewBox="0 0 16 12" style="overflow:visible"><path d="M0.7 10.6 V1.8 Q0.7 0.7 1.8 0.7 H4.6 Q5.4 0.7 5.8 1.4 L6.4 2.3 H11.4 Q12.4 2.3 12.4 3.3 V4.6" fill="#fdefc6" stroke="#c98d3e" stroke-width="1.2" stroke-linejoin="round"/><path d="M0.8 11 L3.5 4.8 H15.2 L12.3 11 Z" fill="url(#gFoldB)" stroke="#c98d3e" stroke-width="1.2" stroke-linejoin="round"/></svg></div>
<div style="position:absolute;left:50.50px;top:149.00px;height:20px;line-height:20px;white-space:pre;font-family:'Liberation Sans';font-size:16px;font-weight:400;color:#000;letter-spacing:0.243px;">D:\Desk\credict.apk.jdb2</div>
<div style="position:absolute;left:69.50px;top:172.00px;height:20px;line-height:20px;white-space:pre;font-family:'Liberation Sans';font-size:16px;font-weight:400;color:#000;letter-spacing:0.312px;">credict.apk</div>
<div style="position:absolute;left:88.50px;top:195.00px;height:20px;line-height:20px;white-space:pre;font-family:'Liberation Sans';font-size:16px;font-weight:400;color:#000;letter-spacing:0.174px;">com.example.flag</div>
<div style="position:absolute;left:107.50px;top:218.00px;height:20px;line-height:20px;white-space:pre;font-family:'Liberation Sans';font-size:16px;font-weight:400;color:#000;letter-spacing:0.219px;">Manifest</div>
<div style="position:absolute;left:107.50px;top:241.00px;height:20px;line-height:20px;white-space:pre;font-family:'Liberation Sans';font-size:16px;font-weight:400;color:#000;letter-spacing:0.197px;">Certificate</div>
<div style="position:absolute;left:107.50px;top:264.00px;height:20px;line-height:20px;white-space:pre;font-family:'Liberation Sans';font-size:16px;font-weight:400;color:#000;letter-spacing:0.183px;">Bytecode</div>
<div style="position:absolute;left:107.50px;top:287.00px;height:20px;line-height:20px;white-space:pre;font-family:'Liberation Sans';font-size:16px;font-weight:400;color:#000;letter-spacing:-0.311px;">Resources</div>
<svg style="position:absolute;left:9.80px;top:323.05px;overflow:visible;" width="44.8" height="21.0" viewBox="0 -15.75 44.8 21.0"><text class="cjk" x="0" y="0" font-size="15" fill="#5e5e5e" style="letter-spacing:-0.4px">过滤器</text></svg>
<div style="position:absolute;left:57.3px;top:329.8px;width:2px;height:2px;background:#5e5e5e;"></div>
<div style="position:absolute;left:57.3px;top:337.4px;width:2px;height:2px;background:#5e5e5e;"></div>
<svg style="position:absolute;left:69.80px;top:323.05px;overflow:visible;" width="30.6" height="21.0" viewBox="0 -15.75 30.6 21.0"><text class="cjk" x="0" y="0" font-size="15" fill="#5e5e5e" style="letter-spacing:-0.2px">输入</text></svg>
<div style="position:absolute;left:100.80px;top:324.00px;height:20px;line-height:20px;white-space:pre;font-family:'Liberation Sans';font-size:15.5px;font-weight:400;color:#5e5e5e;letter-spacing:0.323px;">&quot;Enter&quot;</div>
<svg style="position:absolute;left:155.30px;top:323.05px;overflow:visible;" width="46.3" height="21.0" viewBox="0 -15.75 46.3 21.0"><text class="cjk" x="0" y="0" font-size="15" fill="#5e5e5e" style="letter-spacing:0.1px">来确认</text></svg>
<div style="position:absolute;box-sizing:border-box;left:-1px;top:359px;width:318px;height:582px;border:1px solid #a0a0a0;background:#f0f0f0;border-radius:4px 4px 0 0;"></div>
<div style="position:absolute;left:0px;top:389px;width:316px;height:551px;background:#ffffff;"></div>
<div style="position:absolute;left:-1px;top:388px;width:318px;height:1px;background:#a0a0a0;"></div>
<div style="position:absolute;left:0px;top:360px;width:151px;height:29px;background:#f0f0f0;"></div>
<div style="position:absolute;left:151px;top:361px;width:1px;height:28px;background:#a0a0a0;"></div>
<div style="position:absolute;left:0px;top:389px;width:151px;height:2px;background:#f0f0f0;"></div>
<div style="position:absolute;left:2.5px;top:366px;line-height:0"><svg width="13.6" height="16" viewBox="0 0 13.6 16" style="overflow:visible"><g fill="#a4c639"><path d="M2.9 5.5 H10.7 V11.7 Q10.7 12.5 9.9 12.5 H3.7 Q2.9 12.5 2.9 11.7 Z"/><path d="M2.9 5 Q3.1 1.4 6.8 1.3 Q10.5 1.4 10.7 5 Z"/><rect x="0.2" y="5.4" width="2.3" height="5.6" rx="1.15"/><rect x="11.1" y="5.4" width="2.3" height="5.6" rx="1.15"/><rect x="4.1" y="11.6" width="2" height="4" rx="0.95"/><rect x="7.5" y="11.6" width="2" height="4" rx="0.95"/></g><path d="M4.3 0.3 L5.2 1.9 M9.3 0.3 L8.4 1.9" stroke="#a4c639" stroke-width="0.6"/><circle cx="5.1" cy="3.3" r="0.45" fill="#dbe9a8"/><circle cx="8.5" cy="3.3" r="0.45" fill="#dbe9a8"/></svg></div>
<div style="position:absolute;left:21.50px;top:365.00px;height:20px;line-height:20px;white-space:pre;font-family:'Liberation Sans';font-size:16px;font-weight:400;color:#000;letter-spacing:0.443px;">Bytecode/</div>
<svg style="position:absolute;left:96.60px;top:364.45px;overflow:visible;" width="29.6" height="21.0" viewBox="0 -15.75 29.6 21.0"><text class="cjk" x="0" y="0" font-size="15" fill="#000" style="letter-spacing:-0.7px">层级</text></svg>
<div style="position:absolute;left:133.8px;top:368.8px;line-height:0"><svg width="10.4" height="10.4" viewBox="0 0 10.4 10.4" style="overflow:visible"><path d="M0.6 0.6 H3 L5.2 2.8 L7.4 0.6 H9.8 V3 L7.6 5.2 L9.8 7.4 V9.8 H7.4 L5.2 7.6 L3 9.8 H0.6 V7.4 L2.8 5.2 L0.6 3 Z" fill="#fbfbfb" stroke="#646464" stroke-width="1.05" stroke-linejoin="miter"/></svg></div>
<div style="position:absolute;box-sizing:border-box;left:0px;top:391px;width:314px;height:547px;border:1px solid #a2a5ab;background:#ffffff;border-radius:0;"></div>
<div style="position:absolute;box-sizing:border-box;left:2px;top:393px;width:310px;height:543px;border:1px solid #a0a0a0;background:#ffffff;border-radius:0;"></div>
<div style="position:absolute;left:5px;top:396px;width:304px;height:537px;background:#f0f0f0;"></div>
<div style="position:absolute;left:10px;top:401px;width:294px;height:496px;background:#ffffff;"></div>
<div style="position:absolute;box-sizing:border-box;left:10px;top:902px;width:294px;height:26px;border:1px solid #7a7a7a;background:#ffffff;border-radius:0;"></div>
<svg style="position:absolute;left:12.80px;top:905.05px;overflow:visible;" width="44.8" height="21.0" viewBox="0 -15.75 44.8 21.0"><text class="cjk" x="0" y="0" font-size="15" fill="#5e5e5e" style="letter-spacing:-0.4px">过滤器</text></svg>
<div style="position:absolute;left:60.3px;top:911.8px;width:2px;height:2px;background:#5e5e5e;"></div>
<div style="position:absolute;left:60.3px;top:919.4px;width:2px;height:2px;background:#5e5e5e;"></div>
<svg style="position:absolute;left:72.80px;top:905.05px;overflow:visible;" width="30.6" height="21.0" viewBox="0 -15.75 30.6 21.0"><text class="cjk" x="0" y="0" font-size="15" fill="#5e5e5e" style="letter-spacing:-0.2px">输入</text></svg>
<div style="position:absolute;left:103.80px;top:906.00px;height:20px;line-height:20px;white-space:pre;font-family:'Liberation Sans';font-size:15.5px;font-weight:400;color:#5e5e5e;letter-spacing:0.323px;">&quot;Enter&quot;</div>
<svg style="position:absolute;left:158.30px;top:905.05px;overflow:visible;" width="46.3" height="21.0" viewBox="0 -15.75 46.3 21.0"><text class="cjk" x="0" y="0" font-size="15" fill="#5e5e5e" style="letter-spacing:0.1px">来确认</text></svg>
<div style="position:absolute;left:87px;top:516px;width:116px;height:23px;background:#d9d9d9;"></div>
<div style="position:absolute;left:18.6px;top:408.6px;line-height:0"><svg width="6" height="9" viewBox="0 0 6 9" style="overflow:visible"><path d="M0.8 0.7 L4.4 4.5 L0.8 8.3" fill="none" stroke="#9c9c9c" stroke-width="1.6"/></svg></div>
<div style="position:absolute;left:16px;top:432.6px;line-height:0"><svg width="9" height="6" viewBox="0 0 9 6" style="overflow:visible"><path d="M0.6 0.7 L4.5 4.5 L8.4 0.7" fill="none" stroke="#3c3c3c" stroke-width="1.7"/></svg></div>
<div style="position:absolute;left:35px;top:455.6px;line-height:0"><svg width="9" height="6" viewBox="0 0 9 6" style="overflow:visible"><path d="M0.6 0.7 L4.5 4.5 L8.4 0.7" fill="none" stroke="#3c3c3c" stroke-width="1.7"/></svg></div>
<div style="position:absolute;left:54px;top:478.6px;line-height:0"><svg width="9" height="6" viewBox="0 0 9 6" style="overflow:visible"><path d="M0.6 0.7 L4.5 4.5 L8.4 0.7" fill="none" stroke="#3c3c3c" stroke-width="1.7"/></svg></div>
<div style="position:absolute;left:75.4px;top:500.4px;line-height:0"><svg width="6" height="9" viewBox="0 0 6 9" style="overflow:visible"><path d="M0.8 0.7 L4.4 4.5 L0.8 8.3" fill="none" stroke="#9c9c9c" stroke-width="1.6"/></svg></div>
<div style="position:absolute;left:75.4px;top:523.4px;line-height:0"><svg width="6" height="9" viewBox="0 0 6 9" style="overflow:visible"><path d="M0.8 0.7 L4.4 4.5 L0.8 8.3" fill="none" stroke="#9c9c9c" stroke-width="1.6"/></svg></div>
<div style="position:absolute;left:75.4px;top:546.4px;line-height:0"><svg width="6" height="9" viewBox="0 0 6 9" style="overflow:visible"><path d="M0.8 0.7 L4.4 4.5 L0.8 8.3" fill="none" stroke="#9c9c9c" stroke-width="1.6"/></svg></div>
<div style="position:absolute;left:34px;top:406px;line-height:0"><svg width="13" height="13" viewBox="0 0 13 13" style="overflow:visible"><rect x="1.4" y="1.4" width="10.2" height="10.2" fill="url(#gPkg)" stroke="#b9774f" stroke-width="1"/><rect x="2.6" y="2.6" width="2.6" height="2.6" fill="#f6e4b8"/><rect x="7.8" y="2.6" width="2.6" height="2.6" fill="#f6e4b8"/><rect x="2.6" y="7.8" width="2.6" height="2.6" fill="#f0d6a2"/><rect x="7.8" y="7.8" width="2.6" height="2.6" fill="#f0d6a2"/><path d="M6.5 0 V13 M0 6.5 H13" stroke="#6f3f2c" stroke-width="1.1"/></svg></div>
<div style="position:absolute;left:34px;top:429px;line-height:0"><svg width="13" height="13" viewBox="0 0 13 13" style="overflow:visible"><rect x="1.4" y="1.4" width="10.2" height="10.2" fill="url(#gPkg)" stroke="#b9774f" stroke-width="1"/><rect x="2.6" y="2.6" width="2.6" height="2.6" fill="#f6e4b8"/><rect x="7.8" y="2.6" width="2.6" height="2.6" fill="#f6e4b8"/><rect x="2.6" y="7.8" width="2.6" height="2.6" fill="#f0d6a2"/><rect x="7.8" y="7.8" width="2.6" height="2.6" fill="#f0d6a2"/><path d="M6.5 0 V13 M0 6.5 H13" stroke="#6f3f2c" stroke-width="1.1"/></svg></div>
<div style="position:absolute;left:53px;top:452px;line-height:0"><svg width="13" height="13" viewBox="0 0 13 13" style="overflow:visible"><rect x="1.4" y="1.4" width="10.2" height="10.2" fill="url(#gPkg)" stroke="#b9774f" stroke-width="1"/><rect x="2.6" y="2.6" width="2.6" height="2.6" fill="#f6e4b8"/><rect x="7.8" y="2.6" width="2.6" height="2.6" fill="#f6e4b8"/><rect x="2.6" y="7.8" width="2.6" height="2.6" fill="#f0d6a2"/><rect x="7.8" y="7.8" width="2.6" height="2.6" fill="#f0d6a2"/><path d="M6.5 0 V13 M0 6.5 H13" stroke="#6f3f2c" stroke-width="1.1"/></svg></div>
<div style="position:absolute;left:72px;top:475px;line-height:0"><svg width="13" height="13" viewBox="0 0 13 13" style="overflow:visible"><rect x="1.4" y="1.4" width="10.2" height="10.2" fill="url(#gPkg)" stroke="#b9774f" stroke-width="1"/><rect x="2.6" y="2.6" width="2.6" height="2.6" fill="#f6e4b8"/><rect x="7.8" y="2.6" width="2.6" height="2.6" fill="#f6e4b8"/><rect x="2.6" y="7.8" width="2.6" height="2.6" fill="#f0d6a2"/><rect x="7.8" y="7.8" width="2.6" height="2.6" fill="#f0d6a2"/><path d="M6.5 0 V13 M0 6.5 H13" stroke="#6f3f2c" stroke-width="1.1"/></svg></div>
<div style="position:absolute;left:91px;top:498px;line-height:0"><svg width="13" height="13" viewBox="0 0 13 13" style="overflow:visible"><circle cx="6.5" cy="6.5" r="6.2" fill="url(#gClass)" stroke="#1d6a30" stroke-width="0.6"/><path d="M9 4.6 Q8 3.4 6.4 3.4 Q3.8 3.6 3.8 6.5 Q3.8 9.4 6.4 9.6 Q8 9.6 9 8.4" fill="none" stroke="#fff" stroke-width="1.7"/></svg></div>
<div style="position:absolute;left:91px;top:521px;line-height:0"><svg width="13" height="13" viewBox="0 0 13 13" style="overflow:visible"><circle cx="6.5" cy="6.5" r="6.2" fill="url(#gClass)" stroke="#1d6a30" stroke-width="0.6"/><path d="M9 4.6 Q8 3.4 6.4 3.4 Q3.8 3.6 3.8 6.5 Q3.8 9.4 6.4 9.6 Q8 9.6 9 8.4" fill="none" stroke="#fff" stroke-width="1.7"/></svg></div>
<div style="position:absolute;left:91px;top:544px;line-height:0"><svg width="13" height="13" viewBox="0 0 13 13" style="overflow:visible"><circle cx="6.5" cy="6.5" r="6.2" fill="url(#gClass)" stroke="#1d6a30" stroke-width="0.6"/><path d="M9 4.6 Q8 3.4 6.4 3.4 Q3.8 3.6 3.8 6.5 Q3.8 9.4 6.4 9.6 Q8 9.6 9 8.4" fill="none" stroke="#fff" stroke-width="1.7"/></svg></div>
<div style="position:absolute;left:53.50px;top:403.00px;height:20px;line-height:20px;white-space:pre;font-family:'Liberation Sans';font-size:16px;font-weight:400;color:#000;letter-spacing:0.521px;">android</div>
<div style="position:absolute;left:53.50px;top:426.00px;height:20px;line-height:20px;white-space:pre;font-family:'Liberation Sans';font-size:16px;font-weight:400;color:#000;letter-spacing:0.383px;">com</div>
<div style="position:absolute;left:72.50px;top:449.00px;height:20px;line-height:20px;white-space:pre;font-family:'Liberation Sans';font-size:16px;font-weight:400;color:#000;letter-spacing:0.086px;">example</div>
<div style="position:absolute;left:91.50px;top:472.00px;height:20px;line-height:20px;white-space:pre;font-family:'Liberation Sans';font-size:16px;font-weight:400;color:#000;letter-spacing:0.068px;">flag</div>
<div style="position:absolute;left:110.50px;top:495.00px;height:20px;line-height:20px;white-space:pre;font-family:'Liberation Sans';font-size:16px;font-weight:400;color:#000;letter-spacing:0.117px;">BuildConfig</div>
<div style="position:absolute;left:110.50px;top:518.00px;height:20px;line-height:20px;white-space:pre;font-family:'Liberation Sans';font-size:16px;font-weight:400;color:#000;letter-spacing:0.422px;">MainActivity</div>
<div style="position:absolute;left:110.50px;top:541.00px;height:20px;line-height:20px;white-space:pre;font-family:'Liberation Sans';font-size:16px;font-weight:400;color:#000;letter-spacing:0.000px;">R</div>
<div style="position:absolute;box-sizing:border-box;left:320px;top:108px;width:1463px;height:663px;border:1px solid #a0a0a0;background:#f0f0f0;border-radius:4px 4px 0 0;"></div>
<div style="position:absolute;left:321px;top:138px;width:1461px;height:632px;background:#ffffff;"></div>
<div style="position:absolute;left:320px;top:137px;width:1463px;height:1px;background:#a0a0a0;"></div>
<div style="position:absolute;left:534px;top:110px;width:1px;height:28px;background:#a0a0a0;"></div>
<div style="position:absolute;left:535px;top:109px;width:196px;height:31px;background:#ffffff;"></div>
<div style="position:absolute;left:731px;top:110px;width:1px;height:28px;background:#a0a0a0;"></div>
<div style="position:absolute;left:326px;top:115px;line-height:0"><svg width="13.6" height="16" viewBox="0 0 13.6 16" style="overflow:visible"><g fill="#a4c639"><path d="M2.9 5.5 H10.7 V11.7 Q10.7 12.5 9.9 12.5 H3.7 Q2.9 12.5 2.9 11.7 Z"/><path d="M2.9 5 Q3.1 1.4 6.8 1.3 Q10.5 1.4 10.7 5 Z"/><rect x="0.2" y="5.4" width="2.3" height="5.6" rx="1.15"/><rect x="11.1" y="5.4" width="2.3" height="5.6" rx="1.15"/><rect x="4.1" y="11.6" width="2" height="4" rx="0.95"/><rect x="7.5" y="11.6" width="2" height="4" rx="0.95"/></g><path d="M4.3 0.3 L5.2 1.9 M9.3 0.3 L8.4 1.9" stroke="#a4c639" stroke-width="0.6"/><circle cx="5.1" cy="3.3" r="0.45" fill="#dbe9a8"/><circle cx="8.5" cy="3.3" r="0.45" fill="#dbe9a8"/></svg></div>
<div style="position:absolute;left:344.50px;top:114.00px;height:20px;line-height:20px;white-space:pre;font-family:'Liberation Sans';font-size:16px;font-weight:400;color:#000;letter-spacing:0.113px;">Bytecode/Disassembly</div>
<div style="position:absolute;left:541px;top:116px;line-height:0"><svg width="11" height="14" viewBox="0 0 11 14" style="overflow:visible"><path d="M0.5 0.5 H7 L10.5 4 V13.5 H0.5 Z" fill="#eaf1fb" stroke="#a3812d"/><path d="M7 0.5 V4 H10.5 Z" fill="#e3b860" stroke="#a3812d" stroke-width="0.8"/><path d="M5.8 3.2 V8.2 Q5.8 10.4 3.9 10.4 Q3 10.4 2.6 10" fill="none" stroke="#2a689f" stroke-width="1.9"/></svg></div>
<div style="position:absolute;left:558.50px;top:114.00px;height:20px;line-height:20px;white-space:pre;font-family:'Liberation Sans';font-size:16px;font-weight:400;color:#000;letter-spacing:0.361px;">MainActivity/Source</div>
<div style="position:absolute;left:713.7px;top:117.8px;line-height:0"><svg width="10.4" height="10.4" viewBox="0 0 10.4 10.4" style="overflow:visible"><path d="M0.6 0.6 H3 L5.2 2.8 L7.4 0.6 H9.8 V3 L7.6 5.2 L9.8 7.4 V9.8 H7.4 L5.2 7.6 L3 9.8 H0.6 V7.4 L2.8 5.2 L0.6 3 Z" fill="#fbfbfb" stroke="#646464" stroke-width="1.05" stroke-linejoin="miter"/></svg></div>
<div style="position:absolute;box-sizing:border-box;left:323px;top:140px;width:1457px;height:628px;border:1px solid #a2a5ab;background:#ffffff;border-radius:0;"></div>
<div style="position:absolute;box-sizing:border-box;left:325px;top:142px;width:1453px;height:624px;border:1px solid #a0a0a0;background:#ffffff;border-radius:0 0 4px 4px;"></div>
<div style="position:absolute;left:328px;top:145px;width:1415px;height:569px;background:#ffffff;"></div>
<div style="position:absolute;left:328px;top:145px;width:17px;height:569px;background:#f0f0f0;"></div>
<div style="position:absolute;left:328px;top:714px;width:1418px;height:20px;background:#f0f0f0;"></div>
<div style="position:absolute;left:1743px;top:145px;width:3px;height:589px;background:#f0f0f0;"></div>
<div style="position:absolute;left:347px;top:550px;width:1396px;height:15px;background:#e8e8ff;"></div>
<div style="position:absolute;box-sizing:border-box;left:1746px;top:145px;width:29px;height:589px;border:1px solid #a2a5ab;background:#ffffff;border-radius:0;"></div>
<div style="position:absolute;left:1748px;top:147px;width:25px;height:585px;background:#cecece;"></div>
<div style="position:absolute;left:1748px;top:147px;width:2px;height:585px;background:#ff9500;"></div>
<div style="position:absolute;left:1748px;top:382px;width:25px;height:2px;background:#5cfa00;"></div>
<svg style="position:absolute;left:1748px;top:583px" width="8" height="9"><path d="M0 0 H2 L7.4 4.5 L2 9 H0 Z" fill="#ffff00"/></svg>
<div style="position:absolute;left:1728.2px;top:718.9px;line-height:0"><svg width="8" height="10" viewBox="0 0 8 10" style="overflow:visible"><path d="M1.4 0.7 L6.4 5 L1.4 9.3" fill="none" stroke="#c6c6c6" stroke-width="2.4"/></svg></div>
<div style="position:absolute;left:351.3px;top:718.9px;line-height:0;transform:scaleX(-1)"><svg width="8" height="10" viewBox="0 0 8 10" style="overflow:visible"><path d="M1.4 0.7 L6.4 5 L1.4 9.3" fill="none" stroke="#c6c6c6" stroke-width="2.4"/></svg></div>
<div style="position:absolute;left:326px;top:737px;width:1451px;height:28px;background:#f0f0f0;"></div>
<div style="position:absolute;left:326px;top:736px;width:1451px;height:1px;background:#a0a0a0;"></div>
<div style="position:absolute;left:364px;top:734px;width:57px;height:31px;background:#ffffff;"></div>
<div style="position:absolute;left:363px;top:737px;width:1px;height:27px;background:#a0a0a0;"></div>
<div style="position:absolute;left:421px;top:737px;width:1px;height:27px;background:#a0a0a0;"></div>
<svg style="position:absolute;left:329.00px;top:741.25px;overflow:visible;" width="31.0" height="21.0" viewBox="0 -15.75 31.0 21.0"><text class="cjk" x="0" y="0" font-size="15" fill="#000">描述</text></svg>
<div style="position:absolute;left:367.60px;top:742.00px;height:20px;line-height:20px;white-space:pre;font-family:'Liberation Sans';font-size:16px;font-weight:400;color:#000;letter-spacing:-0.141px;">Source</div>
<div style="position:absolute;left:345px;top:145px;width:1398px;height:569px;overflow:hidden"><div style="position:absolute;left:-345px;top:-145px">
<div class="cl" style="top:147.00px">            <span class="k">this</span>.<span class="m">getSupportFragmentManager</span>().<span class="m">beginTransaction</span>().<span class="m">add</span>(<span class="n">0x7F05003C</span>, <span class="k">new</span> <span class="b">PlaceholderFragment</span>()).<span class="m">commit</span>();</div>
<div class="cl" style="top:162.00px">        }</div>
<div class="cl" style="top:192.00px">        <span class="k">this</span>.<span class="m">findViewById</span>(<span class="n">0x7F05003F</span>).<span class="m">setOnClickListener</span>(<span class="k">new</span> <span class="c">View$OnClickListener</span>(<span class="k">this</span>.<span class="m">findViewById</span>(<span class="n">0x7F05003D</span>), <span class="k">this</span>.<span class="m">findViewById</span>(<span class="n">0x7F05003E</span>)) {</div>
<div class="cl" style="top:207.00px">            <span class="k">public</span> <span class="k">void</span> <span class="m">onClick</span>(<span class="c">View</span> arg13) {</div>
<div class="cl" style="top:222.00px">                <span class="k">int</span> v11 = <span class="n">0x1F</span>;</div>
<div class="cl" style="top:237.00px">                <span class="k">int</span> v9 = <span class="n">2</span>;</div>
<div class="cl" style="top:252.00px">                <span class="k">int</span> v2 = <span class="n">1</span>;</div>
<div class="cl" style="top:267.00px">                <span class="c">String</span> v6 = <span class="k">this</span>.<span class="i">val$editview</span>.<span class="m">getText</span>().<span class="m">toString</span>();</div>
<div class="cl" style="top:282.00px">                <span class="k">if</span>(v6.<span class="m">length</span>() != <span class="n">0x20</span> || v6.<span class="m">charAt</span>(v11) != <span class="n">97</span> || v6.<span class="m">charAt</span>(<span class="n">1</span>) != <span class="n">98</span> || v6.<span class="m">charAt</span>(<span class="n">0</span>) + v6.<span class="m">charAt</span>(v9) - <span class="n">0x30</span> != <span class="n">56</span>) {</div>
<div class="cl" style="top:297.00px">                    v2 = <span class="n">0</span>;</div>
<div class="cl" style="top:312.00px">                }</div>
<div class="cl" style="top:342.00px">                <span class="k">if</span>(v2 == <span class="n">1</span>) {</div>
<div class="cl" style="top:357.00px">                    <span class="k">char</span>[] v5 = <span class="s">&quot;dd2940c04462b4dd7c450528835cca15&quot;</span>.<span class="m">toCharArray</span>();</div>
<div class="cl" style="top:372.00px">                    v5[v9] = ((<span class="k">char</span>)(v5[v9] + v5[<span class="n">3</span>] - <span class="n">50</span>));</div>
<div class="cl" style="top:387.00px">                    v5[<span class="n">4</span>] = ((<span class="k">char</span>)(v5[v9] + v5[<span class="n">5</span>] - <span class="n">0x30</span>));</div>
<div class="cl" style="top:402.00px">                    v5[<span class="n">30</span>] = ((<span class="k">char</span>)(v5[v11] + v5[<span class="n">9</span>] - <span class="n">0x30</span>));</div>
<div class="cl" style="top:417.00px">                    v5[<span class="n">14</span>] = ((<span class="k">char</span>)(v5[<span class="n">27</span>] + v5[<span class="n">28</span>] - <span class="n">97</span>));</div>
<div class="cl" style="top:432.00px">                    <span class="k">int</span> v4;</div>
<div class="cl" style="top:447.00px">                    <span class="k">for</span>(v4 = <span class="n">0</span>; v4 &lt; <span class="n">16</span>; ++v4) {</div>
<div class="cl" style="top:462.00px">                        <span class="k">char</span> v0 = v5[<span class="n">0x1F</span> - v4];</div>
<div class="cl" style="top:477.00px">                        v5[<span class="n">0x1F</span> - v4] = v5[v4];</div>
<div class="cl" style="top:492.00px">                        v5[v4] = v0;</div>
<div class="cl" style="top:507.00px">                    }</div>
<div class="cl" style="top:537.00px">                    <span class="k">this</span>.<span class="i">val$textview</span>.<span class="m">setText</span>(<span class="s">&quot;flag{&quot;</span> + <span class="c">String</span>.<span class="m">valueOf</span>(v5) + <span class="s">&quot;}&quot;</span>);</div>
<div class="cl" style="top:552.00px">                }</div>
<div class="cl" style="top:567.00px">                <span class="k">else</span> {</div>
<div class="cl" style="top:582.00px">                    <span class="k">this</span>.<span class="i">val$textview</span>.<span class="m">setText</span>(<span class="s">&quot;</span><span style="display:inline-block;width:70px"></span><span class="s">&quot;</span>);</div>
<div class="cl" style="top:597.00px">                }</div>
<div class="cl" style="top:612.00px">            }</div>
<div class="cl" style="top:627.00px">        });</div>
<div class="cl" style="top:642.00px">    }</div>
<div class="cl" style="top:672.00px">    <span class="k">public</span> <span class="k">boolean</span> <span class="m">onCreateOptionsMenu</span>(<span class="c">Menu</span> arg3) {</div>
<div class="cl" style="top:687.00px">        <span class="k">this</span>.<span class="m">getMenuInflater</span>().<span class="m">inflate</span>(<span class="n">0x7F0C0000</span>, arg3);</div>
<div class="cl" style="top:702.00px">        <span class="k">return</span> <span class="n">1</span>;</div>
<svg style="position:absolute;left:677.00px;top:581.42px;overflow:visible;" width="71.0" height="13.4" viewBox="0 -10.08 71.0 13.4"><text class="cjk" x="0" y="0" font-size="9.6" font-weight="bold" fill="#ff6a00" style="letter-spacing:0.4px">输入注册码错误</text></svg>
<div style="position:absolute;left:466px;top:550px;width:1px;height:15px;background:#000;"></div>
</div></div>
<div style="position:absolute;box-sizing:border-box;left:320px;top:774px;width:1463px;height:167px;border:1px solid #a0a0a0;background:#f0f0f0;border-radius:4px 4px 0 0;"></div>
<div style="position:absolute;left:321px;top:804px;width:1461px;height:136px;background:#ffffff;"></div>
<div style="position:absolute;left:320px;top:803px;width:1463px;height:1px;background:#a0a0a0;"></div>
<div style="position:absolute;left:321px;top:775px;width:56px;height:29px;background:#f0f0f0;"></div>
<div style="position:absolute;left:377px;top:776px;width:1px;height:28px;background:#a0a0a0;"></div>
<div style="position:absolute;left:468px;top:776px;width:1px;height:28px;background:#a0a0a0;"></div>
<div style="position:absolute;left:321px;top:804px;width:56px;height:2px;background:#f0f0f0;"></div>
<div style="position:absolute;left:325.5px;top:781.7px;line-height:0"><svg width="14" height="13.6" viewBox="0 0 14 13.6" style="overflow:visible"><rect x="0.7" y="0.7" width="12.6" height="9.6" rx="1.6" fill="#2f66b6" stroke="#27589f" stroke-width="0.6"/><rect x="2.4" y="2.3" width="9.2" height="6.2" fill="#f3fbff"/><path d="M3.4 4.2 H8 M3.4 6.4 H10" stroke="#27357c" stroke-width="1"/><path d="M5 10.4 H9 V11.8 H5 Z" fill="#2f66b6"/><rect x="1.6" y="11.8" width="10.8" height="1.5" fill="#2f66b6"/></svg></div>
<svg style="position:absolute;left:344.00px;top:779.65px;overflow:visible;" width="30.4" height="21.0" viewBox="0 -15.75 30.4 21.0"><text class="cjk" x="0" y="0" font-size="15" fill="#000" style="letter-spacing:-0.3px">日志</text></svg>
<div style="position:absolute;left:382.8px;top:781.8px;line-height:0"><svg width="15" height="14" viewBox="0 0 15 14" style="overflow:visible"><rect x="4.4" y="0.6" width="10" height="7.6" fill="#f6fbff" stroke="#4f86cf" stroke-width="1"/><path d="M6.2 2.8 H12.4 M6.2 4.8 H13" stroke="#4f74b6" stroke-width="0.9"/><path d="M7.4 8.6 L5.6 11 L10 8.6 Z" fill="#8f8f8f"/><rect x="0.6" y="6.6" width="5.6" height="4.6" fill="#e6effb" stroke="#6f96d6" stroke-width="0.9"/><path d="M2.4 11.4 H4.6 V13 H2.4 Z" fill="#6f96d6"/><path d="M1.2 13.4 H5.8" stroke="#5f86c6" stroke-width="1"/></svg></div>
<div style="position:absolute;left:402.50px;top:780.00px;height:20px;line-height:20px;white-space:pre;font-family:'Liberation Sans';font-size:16px;font-weight:400;color:#000;letter-spacing:0.219px;">Terminal</div>
<div style="position:absolute;box-sizing:border-box;left:323px;top:806px;width:1457px;height:133px;border:1px solid #a2a5ab;background:#ffffff;border-radius:0;"></div>
<div style="position:absolute;left:325px;top:808px;width:1453px;height:129px;background:#f0f0f0;"></div>
<div style="position:absolute;left:325px;top:915px;width:1432px;height:1px;background:#ffffff;"></div>
<div style="position:absolute;left:1757px;top:808px;width:1px;height:108px;background:#ffffff;"></div>
<div style="position:absolute;left:1758px;top:868px;width:19px;height:26px;background:#cdcdcd;"></div>
<svg style="position:absolute;left:1762.5px;top:814px" width="10" height="9"><path d="M0.9 7.6 L5 3 L9.1 7.6" fill="none" stroke="#4d4d4d" stroke-width="2.1"/></svg>
<svg style="position:absolute;left:1762.5px;top:899.5px" width="10" height="9"><path d="M0.9 1.4 L5 6 L9.1 1.4" fill="none" stroke="#4d4d4d" stroke-width="2.1"/></svg>
<div style="position:absolute;left:1742.4px;top:920.6px;line-height:0"><svg width="8" height="10" viewBox="0 0 8 10" style="overflow:visible"><path d="M1.4 0.7 L6.4 5 L1.4 9.3" fill="none" stroke="#cacaca" stroke-width="2.4"/></svg></div>
<div style="position:absolute;left:331.2px;top:920.6px;line-height:0;transform:scaleX(-1)"><svg width="8" height="10" viewBox="0 0 8 10" style="overflow:visible"><path d="M1.4 0.7 L6.4 5 L1.4 9.3" fill="none" stroke="#cacaca" stroke-width="2.4"/></svg></div>
<div class="lg" style="top:840.00px">Creating a new project (primary file: D:\Desk\credict.apk)</div>
<div class="lg" style="top:855.00px">Adding artifact to project: D:\Desk\credict.apk</div>
<div class="lg" style="top:870.00px">{credict.apk &gt; credict.apk}: 213 resource files were adjusted</div>
<div class="lg" style="top:885.00px">Decompiling at Lcom/example/flag/MainActivity;</div>
<svg style="position:absolute;left:327.00px;top:810.85px;overflow:visible;" width="45.2" height="12.6" viewBox="0 -9.45 45.2 12.6"><text class="cjk" x="0" y="0" font-size="9" font-weight="bold" fill="#000" style="letter-spacing:-0.15px">检查更新中</text></svg>
<div style="position:absolute;left:373.2px;top:818.3px;width:2.3px;height:2.3px;background:#000;"></div>
<div style="position:absolute;left:382.6px;top:818.3px;width:2.3px;height:2.3px;background:#000;"></div>
<div style="position:absolute;left:392px;top:818.3px;width:2.3px;height:2.3px;background:#000;"></div>
<svg style="position:absolute;left:327.00px;top:825.85px;overflow:visible;" width="54.4" height="12.6" viewBox="0 -9.45 54.4 12.6"><text class="cjk" x="0" y="0" font-size="9" font-weight="bold" fill="#000" style="letter-spacing:-0.1px">检查更新出错</text></svg>
<div style="position:absolute;left:1.00px;top:945.00px;height:20px;line-height:20px;white-space:pre;font-family:'Liberation Sans';font-size:16px;font-weight:400;color:#000;letter-spacing:0.217px;">coord: (0,58,17) | addr: Lcom/example/flag/MainActivity$1;-&gt;onClick(Landroid/view/View;)V+70h | loc: ?</div>
<div style="position:absolute;left:1560px;top:942px;width:1px;height:25px;background:#a0a0a0;"></div>
<div style="position:absolute;left:1561px;top:942px;width:1px;height:25px;background:#ffffff;"></div>
<div style="position:absolute;left:1708px;top:942px;width:1px;height:25px;background:#a0a0a0;"></div>
<div style="position:absolute;left:1709px;top:942px;width:1px;height:25px;background:#ffffff;"></div>
<div style="position:absolute;left:1716.50px;top:945.00px;height:20px;line-height:20px;white-space:pre;font-family:'Liberation Sans';font-size:16px;font-weight:400;color:#000;letter-spacing:0.025px;">128.7M</div>
</div></body></html>
